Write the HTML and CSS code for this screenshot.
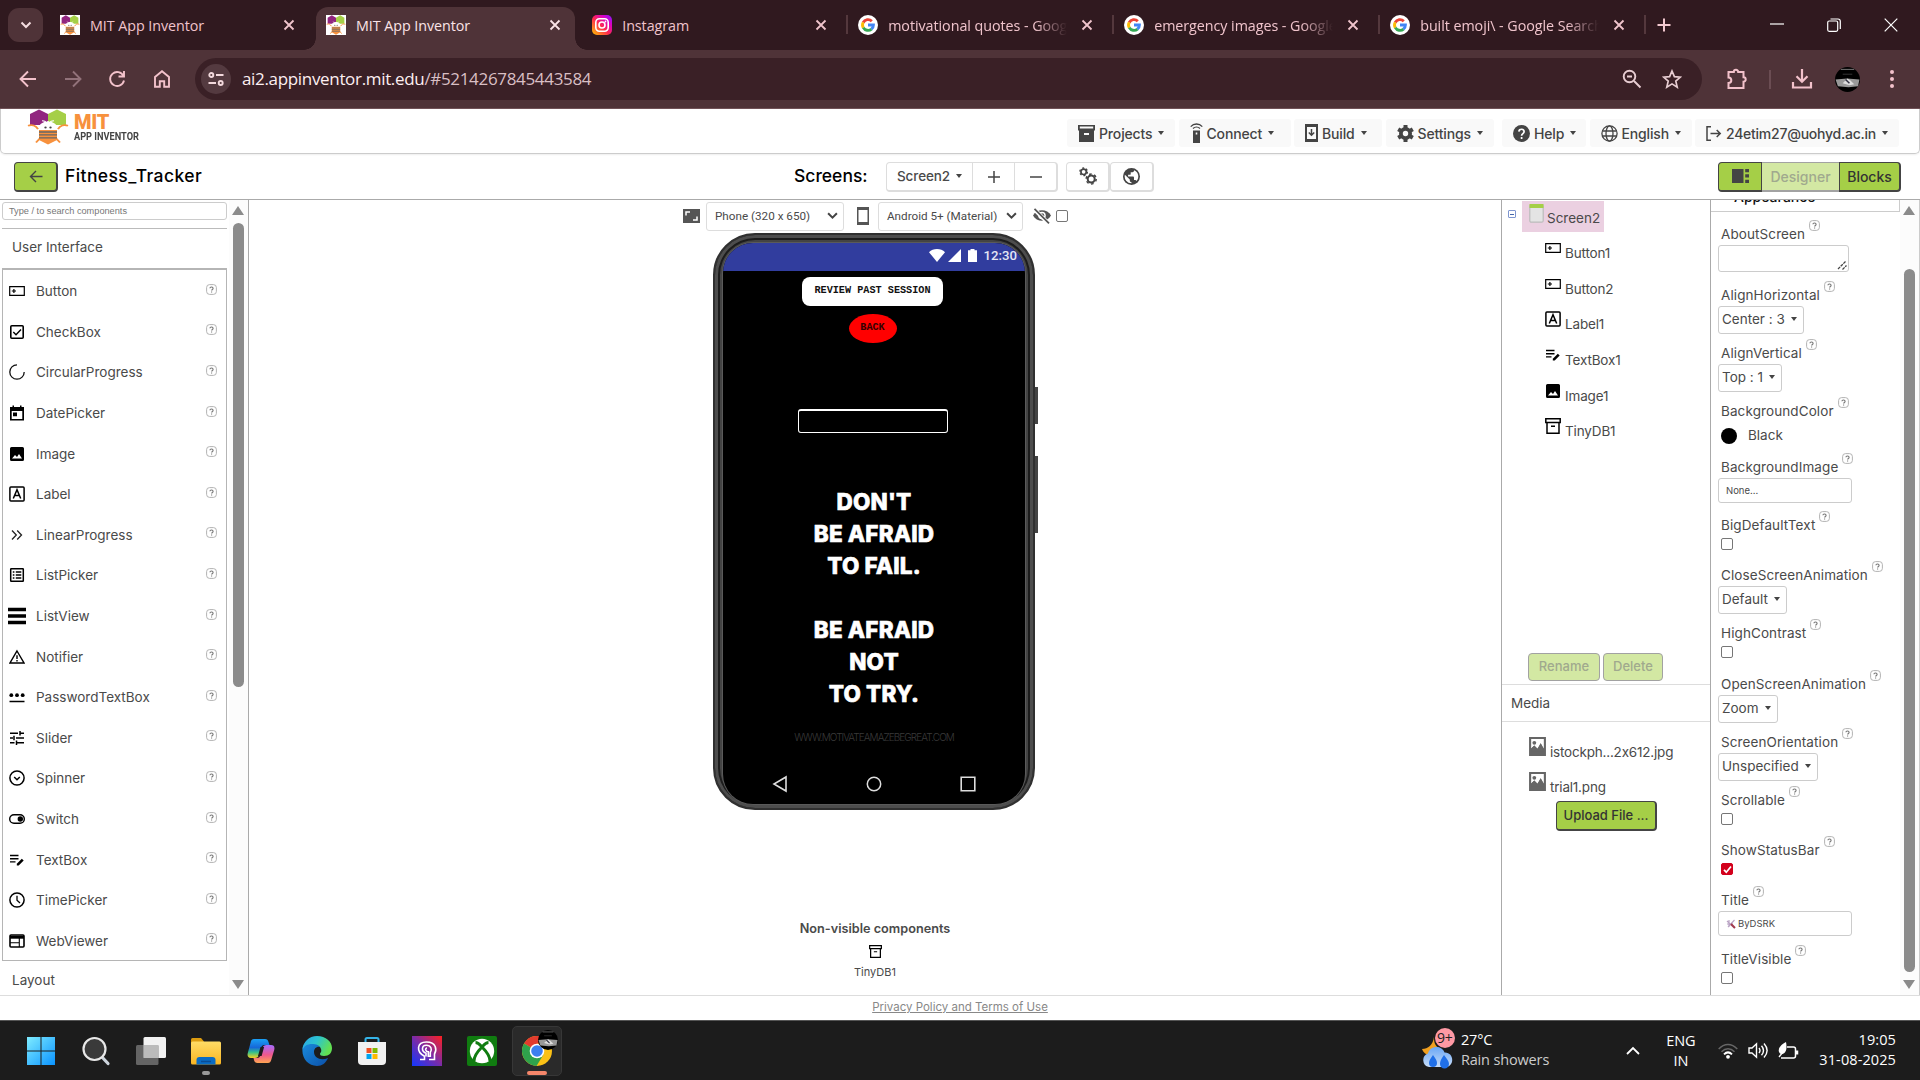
FILE: index.html
```html
<!DOCTYPE html>
<html lang="en">
<head>
<meta charset="utf-8">
<title>MIT App Inventor</title>
<link rel="stylesheet" href="styles.css">
</head>
<body>
<svg class="defs" aria-hidden="true">
  <defs>
    <linearGradient id="g-ig" x1="0" y1="1" x2="1" y2="0"><stop offset="0" stop-color="#ffc800"/><stop offset=".45" stop-color="#ff2a4d"/><stop offset=".75" stop-color="#d800c8"/><stop offset="1" stop-color="#7a1cff"/></linearGradient>
    <linearGradient id="g-win" x1="0" y1="0" x2="1" y2="1"><stop offset="0" stop-color="#7fecff"/><stop offset="1" stop-color="#0a93ff"/></linearGradient>
    <linearGradient id="g-fold" x1="0" y1="0" x2="0" y2="1"><stop offset="0" stop-color="#ffdc66"/><stop offset="1" stop-color="#f9b522"/></linearGradient>
    <linearGradient id="g-id" x1="0" y1="1" x2="1" y2="0"><stop offset="0" stop-color="#1238ff"/><stop offset=".5" stop-color="#7a2ba8"/><stop offset="1" stop-color="#ff2020"/></linearGradient>
    <linearGradient id="g-edge" x1="0" y1="0" x2="1" y2=".4"><stop offset="0" stop-color="#2aa3e8"/><stop offset=".5" stop-color="#2cc4d0"/><stop offset="1" stop-color="#62e052"/></linearGradient>
    <linearGradient id="g-edge2" x1="0" y1="0" x2="1" y2="1"><stop offset="0" stop-color="#1b8fe0"/><stop offset="1" stop-color="#0b4fa8"/></linearGradient>
    <linearGradient id="g-cop1" x1="0" y1="0" x2="0" y2="1"><stop offset="0" stop-color="#1a9ff5"/><stop offset=".45" stop-color="#1668d8"/><stop offset=".7" stop-color="#35c08a"/><stop offset="1" stop-color="#f7d21e"/></linearGradient>
    <linearGradient id="g-cop2" x1="0" y1="0" x2="0" y2="1"><stop offset="0" stop-color="#a56bff"/><stop offset=".55" stop-color="#f0588c"/><stop offset="1" stop-color="#ffa552"/></linearGradient>
    <linearGradient id="g-cloud" x1="0" y1="0" x2="0" y2="1"><stop offset="0" stop-color="#6aa7f5"/><stop offset="1" stop-color="#c6dcf8"/></linearGradient>
    <symbol id="i-bee" viewBox="0 0 42 43">
      <path fill="#91267f" d="M3 6l9-5.500 9 5.500v8l-4 5H3z"/><path fill="#a5cf47" d="M21 6l9-5.500 9 5.500v13H25l-4-5z"/>
      <path fill="#fff" stroke="#fff" stroke-width="2" d="M12 24a9 8 0 0 1 18 0z"/><circle cx="18.500" cy="22" r="1.200" fill="#444"/><circle cx="23.500" cy="22" r="1.200" fill="#444"/>
      <path fill="none" stroke="#f7913d" stroke-width="2" d="M1 20c4-2 8 0 10 4M41 20c-4-2-8 0-10 4M9 40l4-5M33 40l-4-5"/>
      <path fill="none" stroke="#fff" stroke-width="1.200" d="M18 17l-3-3M24 17l3-3"/>
      <path fill="#f7913d" d="M12 25h18v12l-9 5.500L12 37z"/><path stroke="#666" stroke-width="1.600" d="M12 28h18M12 31.500h18M12 35h18"/>
    </symbol>
    <symbol id="i-g" viewBox="0 0 20 20"><circle cx="10" cy="10" r="10" fill="#fff"/><g fill="none" stroke-width="2.900"><path stroke="#ea4335" d="M5.200 7.500A5.400 5.400 0 0 1 13.800 6.200"/><path stroke="#fbbc05" d="M5.300 12.700a5.400 5.400 0 0 1-.1-5.300"/><path stroke="#34a853" d="M13.500 14.100a5.400 5.400 0 0 1-8.200-1.500"/><path stroke="#4285f4" d="M10 10h5.400a5.400 5.400 0 0 1-2 4.200"/></g></symbol>
    <symbol id="i-x" viewBox="0 0 12 12"><path d="M1.500 1.500l9 9m0-9l-9 9" fill="none" stroke="currentColor" stroke-width="1.800"/></symbol>
    <symbol id="i-button" viewBox="0 0 16 16"><path d="M.7 3.700h14.600v8.600H.7z" fill="none" stroke="#000" stroke-width="1.200"/><path d="M2.800 8H7M4.900 5.900v4.200" stroke="#000" stroke-width="1.200"/></symbol>
    <symbol id="i-check" viewBox="0 0 16 16"><rect x="1.800" y="1.800" width="12.400" height="12.400" rx="1" fill="none" stroke="#000" stroke-width="1.600"/><path d="M4.300 8l2.700 2.700 5-5.200" fill="none" stroke="#000" stroke-width="1.400"/></symbol>
    <symbol id="i-circ" viewBox="0 0 16 16"><path d="M8 .8A7.200 7.200 0 1 0 15.200 8" fill="none" stroke="#111" stroke-width="1.300"/></symbol>
    <symbol id="i-date" viewBox="0 0 16 16"><path fill-rule="evenodd" d="M3.500.5H5V2h6V.5h1.500V2H15v13.500H1V2h2.500zM2.700 6v7.900h10.600V6zM4 7.500h4v3.800H4z"/></symbol>
    <symbol id="i-image" viewBox="0 0 16 16"><path fill-rule="evenodd" d="M2.500 1h11A1.500 1.500 0 0 1 15 2.500v11a1.500 1.500 0 0 1-1.500 1.500h-11A1.500 1.500 0 0 1 1 13.500v-11A1.500 1.500 0 0 1 2.500 1zM3 12.500h10L10 8l-2 3-2-2z"/></symbol>
    <symbol id="i-label" viewBox="0 0 16 16"><rect x=".9" y=".9" width="14.200" height="14.200" rx="1" fill="none" stroke="#000" stroke-width="1.500"/><path d="M4.300 12.500L8 3.600l3.700 8.900M5.600 9.600h4.800" fill="none" stroke="#000" stroke-width="1.500"/></symbol>
    <symbol id="i-linear" viewBox="0 0 16 16"><path d="M3 3.500L7.300 8 3 12.500M8.200 3.500L12.500 8l-4.300 4.500" fill="none" stroke="#222" stroke-width="1.300"/></symbol>
    <symbol id="i-listp" viewBox="0 0 16 16"><rect x="1.700" y="1.700" width="12.600" height="12.600" rx=".5" fill="none" stroke="#000" stroke-width="1.500"/><path d="M3.800 5h1.600M3.800 8h1.600m-1.600 3h1.600M6.800 5h5.500M6.800 8h5.500m-5.500 3h5.500" stroke="#000" stroke-width="1.500"/></symbol>
    <symbol id="i-listv" viewBox="0 0 16 16"><path d="M0 2.200h16M0 8h16M0 13.800h16" stroke="#000" stroke-width="3"/></symbol>
    <symbol id="i-notif" viewBox="0 0 16 16"><path d="M8 2L15 14H1z" fill="none" stroke="#000" stroke-width="1.400"/><path d="M8 6.300v3.600M8 10.900v1.500" stroke="#000" stroke-width="1.400"/></symbol>
    <symbol id="i-pass" viewBox="0 0 16 16"><circle cx="2.300" cy="6.200" r="1.900"/><circle cx="8" cy="6.200" r="1.900"/><circle cx="13.700" cy="6.200" r="1.900"/><path d="M.5 12.500h15" stroke="#000" stroke-width="1.500"/></symbol>
    <symbol id="i-slider" viewBox="0 0 16 16"><path d="M1 3.200h8M11 3.200h4M11 1v4.400M1 8h3M5 5.800v4.400M7 8h8M1 12.800h4.500M7.500 10.600V15M8 12.800h7" stroke="#000" stroke-width="1.500"/></symbol>
    <symbol id="i-spin" viewBox="0 0 16 16"><circle cx="8" cy="8" r="7.100" fill="none" stroke="#000" stroke-width="1.500"/><path d="M5.200 7L8 9.700 10.800 7" fill="none" stroke="#000" stroke-width="1.500"/></symbol>
    <symbol id="i-switch" viewBox="0 0 16 16"><rect x=".7" y="3.700" width="14.600" height="8.600" rx="4.300" fill="none" stroke="#000" stroke-width="1.400"/><circle cx="11.300" cy="8" r="2.700"/></symbol>
    <symbol id="i-text" viewBox="0 0 16 16"><path d="M1 3.500h8.500M1 6.700h8.500M1 9.900h5.500" stroke="#000" stroke-width="1.400"/><path d="M7.800 13.600v-1.900l5-5 1.900 1.900-5 5z"/></symbol>
    <symbol id="i-time" viewBox="0 0 16 16"><circle cx="8" cy="8" r="7.100" fill="none" stroke="#000" stroke-width="1.500"/><path d="M8 3.800V8.300l3 2.600" fill="none" stroke="#000" stroke-width="1.300"/></symbol>
    <symbol id="i-web" viewBox="0 0 16 16"><rect x="1" y="2" width="14" height="12" rx="1" fill="none" stroke="#000" stroke-width="1.600"/><path d="M1 4.200h14" stroke="#000" stroke-width="3"/><path d="M1 9.800h9M10.300 5v9" stroke="#000" stroke-width="1.100"/></symbol>
    <symbol id="i-db" viewBox="0 0 16 16"><path d="M.8.800h14.400v3.600H.8zM2 4.500h12v10.700H2zM6 8.300h4" fill="none" stroke="#000" stroke-width="1.500"/></symbol>
    <symbol id="i-q" viewBox="0 0 11 11"><rect x=".6" y=".6" width="9.800" height="9.800" rx="3" fill="#fff" stroke="#aaa" stroke-width=".9"/><path d="M3.900 4.300c.1-1.900 3.200-1.700 3.200.1 0 1-1.500 1.100-1.500 2.200M5.600 7.500v1" fill="none" stroke="#777" stroke-width="1.100"/></symbol>
    <symbol id="i-file" viewBox="0 0 18 18"><path fill="#666" fill-rule="evenodd" d="M1 0h16v18H1zM3 2v9l3-3 3 3 3-5 3 5V2z"/><circle cx="6" cy="5.500" r="1.800" fill="#666"/><path fill="#666" d="M3 13.500V11l3-3 3 4 3-6 3 6v1.500z"/></symbol>
    <symbol id="i-chev" viewBox="0 0 10 7"><path d="M1 1l4 4 4-4" fill="none" stroke="#444" stroke-width="1.800"/></symbol>
    <symbol id="i-photo" viewBox="0 0 26 26"><circle cx="13" cy="13" r="13"/><path d="M6 2.500h14" stroke="#999" stroke-width=".8"/><path d="M8 7.500h10" stroke="#444" stroke-width=".8"/><path fill="#999" d="M.6 13l12-1 12.800 1-1.400 7-10 1-11-1z"/><path fill="#ddd" d="M8 17l5-5 3 2 4 4-5 1z"/><path d="M11 13l4 4" stroke="#334" stroke-width="1.500"/></symbol>
  </defs>
</svg>

<div class="tabstrip">
  <div class="tabsearch"><svg width="12" height="8" viewBox="0 0 12 8"><path d="M1.500 1.500L6 6l4.500-4.500" fill="none" stroke="#f5dde0" stroke-width="2"/></svg></div>
  <div class="tab"><span class="fav sq"><svg width="20" height="20"><use href="#i-bee"/></svg></span><span class="tt">MIT App Inventor</span><svg class="cl"><use href="#i-x"/></svg></div>
  <div class="tab active"><span class="fav sq"><svg width="20" height="20"><use href="#i-bee"/></svg></span><span class="tt">MIT App Inventor</span><svg class="cl"><use href="#i-x"/></svg></div>
  <div class="tab sep"><svg class="fav" viewBox="0 0 20 20"><rect width="20" height="20" rx="5" fill="url(#g-ig)"/><rect x="3.800" y="3.800" width="12.400" height="12.400" rx="3.600" fill="none" stroke="#fff" stroke-width="1.600"/><circle cx="10" cy="10" r="3" fill="none" stroke="#fff" stroke-width="1.600"/><circle cx="13.500" cy="6.500" r=".9" fill="#fff"/></svg><span class="tt">Instagram</span><svg class="cl"><use href="#i-x"/></svg></div>
  <div class="tab sep"><svg class="fav"><use href="#i-g"/></svg><span class="tt fade">motivational quotes - Google Search</span><svg class="cl"><use href="#i-x"/></svg></div>
  <div class="tab sep"><svg class="fav"><use href="#i-g"/></svg><span class="tt fade">emergency images - Google Search</span><svg class="cl"><use href="#i-x"/></svg></div>
  <div class="tab sep last"><svg class="fav"><use href="#i-g"/></svg><span class="tt fade">built emoji\ - Google Search</span><svg class="cl"><use href="#i-x"/></svg></div>
  <svg class="newtab" width="14" height="14" viewBox="0 0 14 14"><path d="M7 .5v13M.5 7h13" stroke="#f3c9d0" stroke-width="2"/></svg>
  <div class="winctl">
    <svg width="14" height="14" viewBox="0 0 14 14"><path d="M0 6h14" stroke="#fff" stroke-width="1.200"/></svg>
    <svg width="14" height="14" viewBox="0 0 14 14"><rect x=".7" y="3" width="10" height="10.300" rx="1.500" fill="none" stroke="#fff" stroke-width="1.200"/><path d="M3.500 1h7.500a2.300 2.300 0 0 1 2.300 2.300V11" fill="none" stroke="#fff" stroke-width="1.200"/></svg>
    <svg width="14" height="14" viewBox="0 0 14 14"><path d="M.7.700l12.600 12.600m0-12.600L.7 13.300" stroke="#fff" stroke-width="1.200"/></svg>
  </div>
</div>

<div class="toolbar">
  <svg class="tb" viewBox="0 0 18 18"><path d="M17 9H2M9 1.500L1.500 9 9 16.500" /></svg>
  <svg class="tb dim" viewBox="0 0 18 18"><path d="M1 9h15M9 1.500L16.500 9 9 16.500"/></svg>
  <svg class="tb" viewBox="0 0 18 18"><path d="M15.500 6A7 7 0 1 0 16 10.500M16 1v5.500h-5.500"/></svg>
  <svg class="tb" viewBox="0 0 18 18"><path d="M2 7l7-5.800L16 7v9.800h-4.800v-5.500H6.800v5.500H2z"/></svg>
  <div class="omni">
    <span class="site"><svg width="16" height="14" viewBox="0 0 16 14"><g fill="none" stroke="#f3d9dd" stroke-width="1.900"><circle cx="3.300" cy="3" r="2"/><path d="M8 3h7.500M.5 11H8"/><circle cx="12.700" cy="11" r="2"/></g></svg></span>
    <span class="url">ai2.appinventor.mit.edu<i>/#5214267845443584</i></span>
    <svg class="oi" viewBox="0 0 20 20"><g fill="none" stroke="#e8cdd2" stroke-width="1.900"><circle cx="7.500" cy="7.500" r="5.800"/><path d="M12 12l6.500 6.500M5 7.500h5"/></g></svg>
    <svg class="oi" viewBox="0 0 20 20"><path d="M10 2l2.400 5.600 6 .5-4.600 4 1.400 6L10 14.900 4.800 18.100l1.400-6-4.600-4 6-.5z" fill="none" stroke="#e8cdd2" stroke-width="1.700"/></svg>
  </div>
  <svg class="ext" width="22" height="22" viewBox="0 0 22 22"><path d="M2.500 4h5.300a2.200 2.200 0 0 1 4.400 0h5.300v5.300a2.200 2.200 0 0 1 0 4.400V20h-15v-5a2.800 2.800 0 0 0 0-5.600z" fill="none" stroke="#f3c2cb" stroke-width="2"/></svg>
  <span class="tsep"></span>
  <svg class="dl" width="22" height="22" viewBox="0 0 22 22"><path d="M11 1v12M5.500 8.200L11 13.700l5.500-5.500M2 14v5.500h18V14" fill="none" stroke="#f3c2cb" stroke-width="2.200"/></svg>
  <svg class="prof" width="25" height="25"><use href="#i-photo"/></svg>
  <svg class="dots" width="6" height="20" viewBox="0 0 6 20"><g fill="#f3c2cb"><circle cx="3" cy="3" r="2"/><circle cx="3" cy="10" r="2"/><circle cx="3" cy="17" r="2"/></g></svg>
</div>

<header class="top">
  <svg class="logo" width="42" height="36" viewBox="0 0 42 43" preserveAspectRatio="none"><path fill="#91267f" d="M3 6l9-5.500 9 5.500v8l-4 5H3z"/><path fill="#a5cf47" d="M21 6l9-5.500 9 5.500v13H25l-4-5z"/><path fill="#fff" stroke="#fff" stroke-width="2" d="M12 24a9 8 0 0 1 18 0z"/><circle cx="18.500" cy="22" r="1.200" fill="#444"/><circle cx="23.500" cy="22" r="1.200" fill="#444"/><path fill="none" stroke="#f7913d" stroke-width="2" d="M1 20c4-2 8 0 10 4M41 20c-4-2-8 0-10 4M9 40l4-5M33 40l-4-5"/><path fill="none" stroke="#fff" stroke-width="1.300" d="M19 17c0-2-1-3-4-3M23 17c0-2 1-3 4-3"/><path fill="#f7913d" d="M12 25h18v12l-9 5.500L12 37z"/><path stroke="#666" stroke-width="1.600" d="M12 27.500h18M12 31h18M12 34.500h18"/></svg>
  <div class="brand"><b>MIT</b><span>APP INVENTOR</span></div>
  <nav class="menu">
    <a class="w108"><svg width="17" height="17" viewBox="0 0 17 17"><path fill="#444" fill-rule="evenodd" d="M0 0h17v5.500h-1V17H1V5.500H0zM1.800 1.500v2h13.400v-2zM6 8v2h5V8z"/></svg><span>Projects</span><i></i></a>
    <a class="w112"><svg width="13" height="20" viewBox="0 0 13 20"><path fill="#444" fill-rule="evenodd" d="M3 7.500h7V20H3zM5.700 9.500v2h1.600v-2z"/><path d="M.7 3.600c3.200-3.500 8.400-3.500 11.600 0M3 5.500c2-1.800 5-1.800 7 0" fill="none" stroke="#444" stroke-width="1.300"/></svg><span>Connect</span><i></i></a>
    <a class="w88"><svg width="13" height="18" viewBox="0 0 13 18"><path fill="#444" fill-rule="evenodd" d="M0 0h13v18H0zM2 3v12h9V3z"/><path d="M6.500 5v6M3.800 8.500l2.700 2.700 2.700-2.700" fill="none" stroke="#444" stroke-width="1.500"/></svg><span>Build</span><i></i></a>
    <a class="w108 g11"><svg width="17" height="17" viewBox="0 0 17 17"><circle cx="8.500" cy="8.500" r="4.600" fill="none" stroke="#444" stroke-width="3.800"/><path d="M8.500 0v3M8.500 14v3M1.200 4.300l2.600 1.500m9.400 5.400l2.600 1.500M1.200 12.700l2.600-1.500m9.400-5.400l2.600-1.500" stroke="#444" stroke-width="4"/></svg><span>Settings</span><i></i></a>
    <a class="w84"><svg width="17" height="17" viewBox="0 0 17 17"><circle cx="8.500" cy="8.500" r="8.500" fill="#444"/><path d="M5.900 6.600c.1-3.300 5.300-3 5.200.1 0 1.900-2.500 1.900-2.500 4M8.600 12v2" fill="none" stroke="#fff" stroke-width="1.700"/></svg><span>Help</span><i></i></a>
    <a class="w102"><svg width="17" height="17" viewBox="0 0 17 17"><g fill="none" stroke="#444" stroke-width="1.300"><circle cx="8.500" cy="8.500" r="7.600"/><ellipse cx="8.500" cy="8.500" rx="3.500" ry="7.600"/><path d="M1.500 6h14m-14 5h14"/></g></svg><span>English</span><i></i></a>
    <a class="w204"><svg width="16" height="15" viewBox="0 0 16 15"><path d="M5 .8H1v13.400h4M4.500 7.500H14M10.700 4l3.500 3.500-3.500 3.500" fill="none" stroke="#444" stroke-width="1.500"/></svg><span>24etim27@uohyd.ac.in</span><i></i></a>
  </nav>
</header>

<div class="bar">
  <button class="btn back"><svg width="14" height="13" viewBox="0 0 14 13"><path d="M13.500 6.500H1.500M7 1L1.500 6.500 7 12" fill="none" stroke="#444" stroke-width="1.400"/></svg></button>
  <span class="proj">Fitness_Tracker</span>
  <span class="scr">Screens:</span>
  <div class="grp"><span class="s1">Screen2<i></i></span><span class="s2"><svg width="12" height="12" viewBox="0 0 12 12"><path d="M6 0v12M0 6h12" stroke="#444" stroke-width="1.500"/></svg></span><span class="s3"><svg width="12" height="12" viewBox="0 0 12 12"><path d="M0 6h12" stroke="#444" stroke-width="1.500"/></svg></span></div>
  <div class="grp g2"><span class="s4"><svg width="18" height="18" viewBox="0 0 18 18"><g fill="none" stroke="#444"><circle cx="4.600" cy="4.800" r="2.700" stroke-width="1.700"/><circle cx="4.600" cy="4.800" r="3.800" stroke-width="1.300" stroke-dasharray="2 2"/><circle cx="12.200" cy="12" r="3.500" stroke-width="2"/><circle cx="12.200" cy="12" r="5" stroke-width="1.500" stroke-dasharray="2.600 2.600"/></g></svg></span></div>
  <div class="grp g3"><span class="s4"><svg width="17" height="17" viewBox="0 0 17 17"><circle cx="8.500" cy="8.500" r="8.500" fill="#444"/><path fill="#fff" d="M1.900 6.800L6.800 11.600v.9c0 .9.800 1.700 1.700 1.700v1.100A6.800 6.800 0 0 1 1.900 6.800zM11 2.200a6.800 6.800 0 0 1 2.500 10.900c-.2-.7-.8-1.200-1.600-1.200H11V9.400c0-.5-.4-.9-.9-.9H5.100V6.800h1.700c.5 0 .9-.4.9-.9V4.300h1.700c.9 0 1.600-.8 1.600-1.700z"/></svg></span></div>
  <div class="modes"><span class="m1"><svg width="17" height="14" viewBox="0 0 17 14"><path fill="#444" d="M0 0h11.500v14H0zM13.200 0H17v3.300h-3.800zM13.200 5.300H17v3.300h-3.800zM13.200 10.700H17V14h-3.800z"/></svg></span><span class="m2">Designer</span><span class="m3">Blocks</span></div>
</div>

<main class="work">
  <section class="palette">
    <div class="pcol">
      <div class="search">Type / to search components</div>
      <div class="cat">User Interface</div>
      <ul class="items">
        <li><svg><use href="#i-button"/></svg><span>Button</span><svg class="q"><use href="#i-q"/></svg></li>
        <li><svg><use href="#i-check"/></svg><span>CheckBox</span><svg class="q"><use href="#i-q"/></svg></li>
        <li><svg><use href="#i-circ"/></svg><span>CircularProgress</span><svg class="q"><use href="#i-q"/></svg></li>
        <li><svg><use href="#i-date"/></svg><span>DatePicker</span><svg class="q"><use href="#i-q"/></svg></li>
        <li><svg><use href="#i-image"/></svg><span>Image</span><svg class="q"><use href="#i-q"/></svg></li>
        <li><svg><use href="#i-label"/></svg><span>Label</span><svg class="q"><use href="#i-q"/></svg></li>
        <li><svg><use href="#i-linear"/></svg><span>LinearProgress</span><svg class="q"><use href="#i-q"/></svg></li>
        <li><svg><use href="#i-listp"/></svg><span>ListPicker</span><svg class="q"><use href="#i-q"/></svg></li>
        <li><svg class="big"><use href="#i-listv"/></svg><span>ListView</span><svg class="q"><use href="#i-q"/></svg></li>
        <li><svg><use href="#i-notif"/></svg><span>Notifier</span><svg class="q"><use href="#i-q"/></svg></li>
        <li><svg><use href="#i-pass"/></svg><span>PasswordTextBox</span><svg class="q"><use href="#i-q"/></svg></li>
        <li><svg><use href="#i-slider"/></svg><span>Slider</span><svg class="q"><use href="#i-q"/></svg></li>
        <li><svg><use href="#i-spin"/></svg><span>Spinner</span><svg class="q"><use href="#i-q"/></svg></li>
        <li><svg><use href="#i-switch"/></svg><span>Switch</span><svg class="q"><use href="#i-q"/></svg></li>
        <li><svg><use href="#i-text"/></svg><span>TextBox</span><svg class="q"><use href="#i-q"/></svg></li>
        <li><svg><use href="#i-time"/></svg><span>TimePicker</span><svg class="q"><use href="#i-q"/></svg></li>
        <li><svg><use href="#i-web"/></svg><span>WebViewer</span><svg class="q"><use href="#i-q"/></svg></li>
      </ul>
      <div class="cat2">Layout</div>
    </div>
    <div class="sb"><b class="up"></b><b class="thumb t1"></b><b class="down"></b></div>
  </section>

  <section class="viewer">
    <div class="vbar">
      <svg width="17" height="14" viewBox="0 0 17 14"><path fill="#555" d="M0 0h17v14H0z"/><path d="M3 6.500V3h4M14 7.500V11h-4" fill="none" stroke="#fff" stroke-width="1.500"/></svg>
      <div class="sel a">Phone (320 x 650)<svg width="11" height="8"><use href="#i-chev"/></svg></div>
      <svg class="ph" width="12" height="18" viewBox="0 0 12 18"><path fill="#555" fill-rule="evenodd" d="M0 0h12v18H0zM1.500 3v12h9V3z"/></svg>
      <div class="sel b">Android 5+ (Material)<svg width="11" height="8"><use href="#i-chev"/></svg></div>
      <svg class="eye" width="18" height="16" viewBox="0 0 18 16"><path d="M0 7.500C3.500.500 14.500.500 18 7.500 14.500 14.500 3.500 14.500 0 7.500z" fill="#555"/><circle cx="9" cy="7.500" r="3.800" fill="#fff"/><circle cx="9" cy="7.500" r="2.300" fill="#555"/><path d="M1.500 1.500l14 14" stroke="#fff" stroke-width="4"/><path d="M1.500.8l14.500 14.500" stroke="#555" stroke-width="1.700"/></svg>
      <span class="cb"></span>
    </div>
    <div class="phone">
      <b class="side u"></b><b class="side d"></b>
      <div class="glass">
        <div class="status">
          <svg width="16" height="13" viewBox="0 0 16 13"><path fill="#fff" d="M0 3.200C4-1 12-1 16 3.200L8 13z"/></svg>
          <svg width="13" height="13" viewBox="0 0 13 13"><path fill="#fff" d="M13 0v13H0z"/></svg>
          <svg width="9" height="13" viewBox="0 0 9 13"><path fill="#fff" d="M2.500 0h4v1.300H9V13H0V1.300h2.500z"/></svg>
          <span>12:30</span>
        </div>
        <div class="review">REVIEW PAST SESSION</div>
        <div class="bk">BACK</div>
        <div class="input"></div>
        <div class="quote"><p>DON'T</p><p>BE AFRAID</p><p>TO FAIL.</p><p>&nbsp;</p><p>BE AFRAID</p><p>NOT</p><p>TO TRY.</p></div>
        <div class="site-url">WWW.MOTIVATEAMAZEBEGREAT.COM</div>
        <div class="navi">
          <svg width="16" height="18" viewBox="0 0 16 18"><path d="M14 2v14L2 9z" fill="none" stroke="#ddd" stroke-width="1.600"/></svg>
          <svg width="16" height="18" viewBox="0 0 16 18"><circle cx="8" cy="9" r="6.700" fill="none" stroke="#ddd" stroke-width="1.500"/></svg>
          <svg width="16" height="18" viewBox="0 0 16 18"><path d="M1.200 2.200h13.600v13.600H1.200z" fill="none" stroke="#ddd" stroke-width="1.600"/></svg>
        </div>
      </div>
    </div>
    <div class="nonvis"><b>Non-visible components</b><svg width="13" height="13"><use href="#i-db"/></svg><span>TinyDB1</span></div>
  </section>

  <section class="treecol">
    <div class="root"><span class="minus"></span><div class="hl"><svg width="15" height="19" viewBox="0 0 15 19"><rect x=".8" y=".8" width="13.400" height="17.400" rx="1.500" fill="#e4e4e4" stroke="#bbb" stroke-width="1.200"/><path fill="#a5cf47" d="M.5 0h14v4H.5z"/></svg><span>Screen2</span></div></div>
    <ul class="tree">
      <li><svg><use href="#i-button"/></svg>Button1</li>
      <li><svg><use href="#i-button"/></svg>Button2</li>
      <li><svg><use href="#i-label"/></svg>Label1</li>
      <li><svg><use href="#i-text"/></svg>TextBox1</li>
      <li><svg><use href="#i-image"/></svg>Image1</li>
      <li><svg><use href="#i-db"/></svg>TinyDB1</li>
    </ul>
    <div class="acts"><span class="dis r">Rename</span><span class="dis d">Delete</span></div>
    <div class="media">Media</div>
    <ul class="files"><li><svg><use href="#i-file"/></svg>istockph...2x612.jpg</li><li><svg><use href="#i-file"/></svg>trial1.png</li></ul>
    <button class="btn upl">Upload File ...</button>
  </section>

  <section class="props">
    <div class="plist">
      <div class="ahead"><span>Appearance</span></div>
      <div class="p h61"><label>AboutScreen<svg><use href="#i-q"/></svg></label><div class="ta"><svg width="10" height="10" viewBox="0 0 10 10"><path d="M1 9l8-8M5.500 9.500l4-4" stroke="#444" stroke-width="1.300" stroke-dasharray="3 .8"/></svg></div></div>
      <div class="p"><label>AlignHorizontal<svg><use href="#i-q"/></svg></label><div class="dd">Center : 3<i></i></div></div>
      <div class="p"><label>AlignVertical<svg><use href="#i-q"/></svg></label><div class="dd">Top : 1<i></i></div></div>
      <div class="p h56"><label>BackgroundColor<svg><use href="#i-q"/></svg></label><div class="color"><b></b>Black</div></div>
      <div class="p"><label>BackgroundImage<svg><use href="#i-q"/></svg></label><div class="tx">None...</div></div>
      <div class="p h50"><label>BigDefaultText<svg><use href="#i-q"/></svg></label><span class="cb"></span></div>
      <div class="p"><label>CloseScreenAnimation<svg><use href="#i-q"/></svg></label><div class="dd">Default<i></i></div></div>
      <div class="p h51"><label>HighContrast<svg><use href="#i-q"/></svg></label><span class="cb"></span></div>
      <div class="p"><label>OpenScreenAnimation<svg><use href="#i-q"/></svg></label><div class="dd">Zoom<i></i></div></div>
      <div class="p"><label>ScreenOrientation<svg><use href="#i-q"/></svg></label><div class="dd">Unspecified<i></i></div></div>
      <div class="p h50"><label>Scrollable<svg><use href="#i-q"/></svg></label><span class="cb"></span></div>
      <div class="p h50"><label>ShowStatusBar<svg><use href="#i-q"/></svg></label><span class="cb on"><svg width="9" height="9" viewBox="0 0 9 9"><path d="M1 4.800l2.300 2.400L8 1.500" fill="none" stroke="#fff" stroke-width="1.700"/></svg></span></div>
      <div class="p h59"><label>Title<svg><use href="#i-q"/></svg></label><div class="tx"><svg width="10" height="10" viewBox="0 0 10 10"><path d="M1 2l7.500 7M8.500 1L2 8M3 1v7M1 5h6" stroke="#b9a3c4" stroke-width="1.200"/><path d="M5 5l4 4" stroke="#a33a4c" stroke-width="1.900"/></svg>ByDSRK</div></div>
      <div class="p"><label>TitleVisible<svg><use href="#i-q"/></svg></label><span class="cb"></span></div>
    </div>
    <div class="sb"><b class="up"></b><b class="thumb t2"></b><b class="down"></b></div>
  </section>
</main>
<footer class="foot"><a>Privacy Policy and Terms of Use</a></footer>

<div class="taskbar">
  <div class="apps">
    <span><svg width="30" height="30" viewBox="0 0 30 30"><path fill="url(#g-win)" d="M1 1h13.500v13.500H1zM15.500 1H29v13.500H15.500zM1 15.500h13.500V29H1zM15.500 15.500H29V29H15.500z"/></svg></span>
    <span><svg width="30" height="30" viewBox="0 0 30 30"><path d="M20 20l7 7.500" stroke="#ccd4dc" stroke-width="3.200" stroke-linecap="round"/><circle cx="13.500" cy="13" r="11" fill="#3a3a3a" stroke="#e8e8e8" stroke-width="2.200"/></svg></span>
    <span><svg width="30" height="30" viewBox="0 0 30 30"><rect x="7.500" y="1" width="22.500" height="21" rx="1.500" fill="#f2f2f2"/><rect x="0" y="9" width="22.500" height="20" rx="1.500" fill="#777" fill-opacity=".8"/><path fill="#bbb" d="M7.500 9h15v13h-15z"/></svg></span>
    <span class="run"><svg width="30" height="30" viewBox="0 0 30 30"><path fill="#dc9c10" d="M0 3.500Q0 2 1.500 2H10l3 3.500V9H0z"/><rect y="5.500" width="30" height="23" rx="1.500" fill="url(#g-fold)"/><path fill="#0a6cc4" d="M5.500 28.500V24a3 3 0 0 1 3-3h13a3 3 0 0 1 3 3v4.500z"/><path d="M10 25.500h10" stroke="#0a4c94" stroke-width="1.500"/></svg></span>
    <span><svg width="30" height="30" viewBox="0 0 30 30"><path fill="url(#g-cop1)" d="M8 3h11c2 0 3 1 3.500 3l1 3h-5c-2 0-3 1-3.500 3l-2 7c-.6 2-2 3-4 3H5c-3 0-4-2-3.200-5l2.700-10C5 4 6 3 8 3z"/><path fill="url(#g-cop2)" d="M22 27H11.500c-2 0-3-1-3.500-3l-.5-2H11c2 0 3-1 3.500-3l2-7c.6-2 2-3 4-3H25c3 0 4 2 3.200 5l-2.700 9c-.6 2.500-1.500 4-3.500 4z"/><path fill="#1c1c1c" d="M14.500 11h3.600l-2.500 9H12z"/></svg></span>
    <span><svg width="30" height="30" viewBox="0 0 30 30"><path fill="url(#g-edge2)" d="M.5 13C1 6 7 3 13 6l6 5c-5-1-7 2-7 5 0 6 7 9 14 6-2 5-6 8-11 8C6 30-.5 22 .5 13z"/><path fill="url(#g-edge)" d="M.5 14C1 6 7 0 15 0c9 0 15 6 15 12 0 5-3 8-8 8-3 0-4-1-4-2 0-1 2-2 1-5-1-4-5-5-9-5C5 8 2 10 .5 14z"/></svg></span>
    <span><svg width="30" height="30" viewBox="0 0 30 30"><path d="M8.500 8V3.500Q8.500 2 10 2h10q1.500 0 1.500 1.500V8" fill="none" stroke="#35b4e8" stroke-width="2"/><path fill="#f1f1f1" d="M1 6h28v19a4 4 0 0 1-4 4H5a4 4 0 0 1-4-4z"/><path fill="#f25022" d="M9.500 12h5v5h-5z"/><path fill="#7fba00" d="M15.500 12h5v5h-5z"/><path fill="#00a4ef" d="M9.500 18h5v5h-5z"/><path fill="#ffb900" d="M15.500 18h5v5h-5z"/></svg></span>
    <span><svg width="30" height="30" viewBox="0 0 30 30"><path fill="url(#g-id)" d="M0 0h30v30H0z"/><g fill="none" stroke="#fff" stroke-width="1.600"><path d="M8 23.500h4.500v-3.300C4 16 4.500 6 14.500 6S25 14 22.500 18v5.500h-5.500"/><path d="M14 20.500v-3.200c-5-2-4.500-8 .3-8s6.200 4.200 4 7.200v3.800h-2v-4.500c-3 0-3.500-3.800-1.300-3.800"/></g></svg></span>
    <span><svg width="30" height="30" viewBox="0 0 30 30"><rect width="30" height="30" rx="2" fill="#107c10"/><circle cx="15" cy="15" r="12.200" fill="#fff"/><path d="M7 25c0-6 5-11 8-14 3 3 8 8 8 14M8.500 6.500c3 0 5 3 6.500 4.500 1.500-1.500 3.500-4.500 6.500-4.500" fill="none" stroke="#107c10" stroke-width="3"/></svg></span>
    <span class="act"><svg width="30" height="30" viewBox="0 0 30 30"><circle cx="15" cy="15" r="15" fill="#fbc116"/><path fill="#e33b2e" d="M15 15L2 7.500A15 15 0 0 1 28 7.500H15z"/><path fill="#2fa24c" d="M15 15L2 7.500A15 15 0 0 0 14.500 30l7-11.500z"/><circle cx="15" cy="15" r="7.300" fill="#fff"/><circle cx="15" cy="15" r="5.800" fill="#3c7ff0"/></svg><svg class="mini" width="20" height="20"><use href="#i-photo"/></svg></span>
  </div>
  <div class="weather">
    <div class="wi"><svg width="31" height="32" viewBox="0 0 31 32"><path fill="#f0a020" d="M12 0c0 6 1 10 8 12L8 18C4 18 1 15 0 12c6 0 11-4 12-12z"/><path fill="url(#g-cloud)" d="M7 30a7 7 0 0 1-1-13.500C8 8 20 8 22.500 15.500 32 15 33 29 24 30z"/><path fill="#1f6fe8" d="M11 18c3 4 4 6 4 8a4 4 0 0 1-8 0c0-2 1-4 4-8zM22 18c3 4 5 6 5 9a4.500 4.500 0 0 1-9 0c0-3 1-5 4-9z"/></svg><b>9+</b></div>
    <div class="wt"><span>27°C</span><em>Rain showers</em></div>
  </div>
  <svg class="tchev" width="14" height="9" viewBox="0 0 14 9"><path d="M1 8l6-6 6 6" fill="none" stroke="#fff" stroke-width="1.800"/></svg>
  <div class="lang"><span>ENG</span><span>IN</span></div>
  <div class="sys">
    <svg width="20" height="16" viewBox="0 0 20 16"><g fill="none" stroke-width="1.500"><path stroke="#666" d="M.7 6c5.500-6 13-6 18.600 0M3.500 8.800c4-4 9-4 13 0"/><path stroke="#fff" stroke-width="1.900" d="M6 11.300c2.500-2.500 5.500-2.500 8 0"/></g><circle cx="10" cy="13.800" r="1.900" fill="#fff"/></svg>
    <svg width="20" height="17" viewBox="0 0 20 17"><path d="M1 6h3l4.500-4.200v13.400L4 11H1zM11 6c1.200 1.500 1.200 3.500 0 5M13.500 3.700c2.500 3 2.500 6.600 0 9.600M16 1.500c4 4.500 4 9.500 0 14" fill="none" stroke="#fff" stroke-width="1.400"/></svg>
    <svg width="21" height="18" viewBox="0 0 21 18"><path d="M9 5h6.500q2 0 2 2v7q0 2-2 2H3" fill="none" stroke="#fff" stroke-width="1.500"/><path d="M19 8.500v4" stroke="#fff" stroke-width="2.500"/><path fill="#fff" d="M8 0c1 5 1 12-5 12-4-2-3-8 5-12z"/><path d="M1 15l4-5" stroke="#fff" stroke-width="1.300"/></svg>
  </div>
  <div class="clock"><span>19:05</span><span>31-08-2025</span></div>
</div>
</body>
</html>
```
FILE: styles.css
```css
* { box-sizing: border-box; }
body { margin: 0; width: 1920px; height: 1080px; overflow: hidden; background: #fff; font-family: Inter, "Open Sans", sans-serif; font-feature-settings: "calt" 0; font-size: 13.5px; color: #4a4a4a; display: flex; flex-direction: column; }
svg { display: block; flex: none; }
ul, p { margin: 0; padding: 0; list-style: none; }
i { font-style: normal; }
.defs { position: absolute; width: 0; height: 0; }

/* browser tabs */
.tabstrip { height: 50px; flex: none; background: #30191f; display: flex; align-items: center; padding-left: 8px; font-family: "Open Sans", sans-serif; color: #f0c4cc; }
.tabsearch { width: 35px; height: 34px; border-radius: 11px; background: #4f3338; display: flex; align-items: center; justify-content: center; margin-right: 7px; }
.tab { width: 266px; height: 43px; align-self: flex-end; padding: 0 21px 7px 10px; display: flex; align-items: center; position: relative; }
.tab.active { background: #4f3338; border-radius: 12px 12px 0 0; color: #fbe4e7; margin: 0 7px 0 0; width: 259.200px; padding-right: 14px; }
.tab.active::before, .tab.active::after { content: ""; position: absolute; bottom: 0; width: 12px; height: 12px; }
.tab.active::before { left: -12px; background: radial-gradient(circle at 0 0, transparent 11.500px, #4f3338 12px); }
.tab.active::after { right: -12px; background: radial-gradient(circle at 100% 0, transparent 11.500px, #4f3338 12px); }
.tab.sep::after { content: ""; position: absolute; right: 0; top: 8px; width: 2px; height: 19px; background: #54383d; }
.fav { width: 20px; height: 20px; margin-right: 10px; flex: none; }
.fav.sq { background: #fff; }
.tt { flex: 1; font-size: 14.300px; letter-spacing: -.05px; white-space: nowrap; overflow: hidden; margin-right: 20px; }
.tt.fade { -webkit-mask-image: linear-gradient(90deg, #000 82%, transparent 100%); mask-image: linear-gradient(90deg, #000 82%, transparent 100%); margin-right: 14px; }
.cl { width: 12px; height: 12px; }
.newtab { margin-left: 11px; }
.winctl { margin-left: auto; display: flex; gap: 43px; padding-right: 22px; }

/* browser toolbar */
.toolbar { height: 59px; flex: none; background: #4f3338; border-bottom: 1px solid #69494f; display: flex; align-items: center; padding: 0 25px 0 19px; }
.tb { width: 18px; height: 18px; fill: none; stroke: #f3c2cb; stroke-width: 1.900; margin-right: 26.500px; }
.tb.dim { stroke: #92727a; }
.omni { width: 1507px; height: 42px; margin-left: -2px; border-radius: 21px; background: #3a2026; display: flex; align-items: center; padding-left: 6px; padding-right: 20px; }
.site { width: 30px; height: 30px; border-radius: 50%; background: #543a40; display: flex; align-items: center; justify-content: center; margin-right: 11px; }
.url { flex: 1; font-family: "Open Sans", sans-serif; font-size: 17px; color: #fdeff1; letter-spacing: -.33px; padding-bottom: 1px; }
.url i { color: #d9bfc4; }
.oi { width: 20px; height: 20px; margin-left: 20px; }
.ext { margin-left: 24px; }
.tsep { width: 2px; height: 19px; background: #6b4d53; margin-left: 21px; }
.dl { margin-left: 20px; }
.prof { margin-left: 22px; }
.dots { margin-left: auto; }

/* app header */
.top { height: 45px; flex: none; border: 1px solid #ccc; border-top: 0; border-radius: 0 0 5px 5px; display: flex; align-items: flex-start; padding-left: 26px; box-shadow: 0 1px 2px #eee; }
.brand { display: flex; flex-direction: column; padding-left: 5px; font-family: Roboto, sans-serif; line-height: 1; }
.brand b { color: #f7913d; font-size: 20px; font-weight: 900; margin-top: 3px; letter-spacing: -.3px; }
.brand span { font-size: 10px; font-weight: 700; color: #444; white-space: nowrap; transform: scaleX(.92); transform-origin: 0 0; }
.menu { margin-left: auto; margin-right: 20px; margin-top: 10px; display: flex; gap: 3.500px; }
.menu a { height: 28px; background: #f9f9f9; border-radius: 3px; display: flex; align-items: center; padding-left: 11px; font-weight: 500; font-size: 14px; white-space: nowrap; color: #444; }
.menu a span { margin-left: 4px; letter-spacing: -.15px; }
.menu a i, .s1 i, .dd i { border: 3px solid transparent; border-top: 4px solid #444; border-bottom: 0; margin-left: 6px; }
.w108 { width: 108px; } .w112 { width: 112px; } .w88 { width: 88px; } .w84 { width: 84px; } .w102 { width: 102px; } .w204 { width: 204px; }
.menu .w204 span { letter-spacing: -.25px; }
.g11 { margin-right: 5px; }

.bar { height: 46px; flex: none; border-bottom: 1px solid #aaa; display: flex; align-items: flex-start; padding: 8px 19px 0 14px; }
.btn { background: #a5cf47; border: 1px solid #444; border-right-width: 2px; border-bottom-width: 2px; border-radius: 4px; padding: 0; display: flex; align-items: center; justify-content: center; font: 500 13px Inter, sans-serif; color: #333; }
.back { width: 44px; height: 30px; }
.proj { margin-left: 7px; font-size: 17.500px; font-weight: 500; color: #000; line-height: 28px; width: 729px; letter-spacing: .4px; }
.scr { font-size: 17.500px; font-weight: 500; color: #000; line-height: 28px; width: 92px; }
.grp { display: flex; height: 30px; border: 1px solid #ddd; border-right-width: 2px; border-bottom-width: 2px; border-radius: 4px; }
.grp span { display: flex; align-items: center; justify-content: center; }
.grp span + span { border-left: 1px solid #ddd; }
.s1 { width: 85px; font-weight: 500; padding-bottom: 2px; letter-spacing: -.1px; } .s2 { width: 42px; } .s3 { width: 42px; }
.g2 { margin-left: 8px; } .s4 { width: 41px; padding-bottom: 1px; }
.modes { margin-left: auto; display: flex; height: 30px; font-weight: 500; font-size: 14px; }
.modes span { display: flex; align-items: center; justify-content: center; border: 1px solid #444; border-bottom-width: 2px; background: #a5cf47; padding-bottom: 1px; }
.modes .m1 { width: 44px; border-radius: 4px 0 0 4px; }
.modes .m2 { width: 77px; background: #d3e8a3; border-color: #a2a2a2; color: #a0a98e; border-left: 0; border-right: 0; }
.modes .m3 { width: 62px; border-radius: 0 4px 4px 0; border-right-width: 2px; color: #333; }

/* workspace */
.work { height: 796px; flex: none; display: flex; border-bottom: 1px solid #ddd; }
.palette { width: 249px; border-right: 1px solid #aaa; display: flex; }
.pcol { width: 229px; padding: 2px 2px 0; }
.search { width: 225px; height: 18px; border: 1px solid #ccc; border-radius: 3px; font: 9.200px/17px "Liberation Sans", sans-serif; color: #777; padding-left: 6px; }
.cat { margin-top: 8px; border-top: 1px solid #bbb; width: 225px; height: 40px; line-height: 37px; padding-left: 10px; }
.items { width: 225px; height: 693px; border: 1px solid #b5b5b5; border-top-width: 2px; padding-top: 1px; }
.items li { height: 40.600px; display: flex; align-items: center; padding-left: 6px; }
.items li > svg { width: 16px; height: 16px; }
.items li > svg.big { width: 18px; height: 18px; margin-left: -1px; margin-right: -1px; }
.items li > span { flex: 1; margin-left: 11px; }
.items li > .q { width: 11px; height: 11px; margin: -4px 9px 0 0; }
.cat2 { padding: 11px 0 0 10px; }
.sb { width: 19px; background: #fcfcfc; position: relative; display: flex; flex-direction: column; align-items: center; padding-top: 6px; padding-right: 1px; }
.up { border: 6px solid transparent; border-bottom: 9px solid #8b8b8b; border-top: 0; }
.down { border: 6px solid transparent; border-top: 9px solid #8b8b8b; border-bottom: 0; margin-top: auto; margin-bottom: 6px; }
.thumb { width: 11px; border-radius: 6px; background: #8b8b8b; }
.t1 { height: 464px; margin-top: 8px; }
.t2 { height: 703px; margin-top: 54px; }

.viewer { width: 1252px; display: flex; flex-direction: column; align-items: flex-start; }
.vbar { display: flex; align-items: center; height: 31px; padding-top: 1px; padding-left: 434px; font: 11.700px Roboto, sans-serif; }
.sel { height: 29px; border: 1px solid #ddd; border-radius: 3px; display: flex; align-items: center; justify-content: space-between; padding: 0 5px 1px 8px; white-space: nowrap; }
.sel.a { width: 138px; margin-left: 6px; } .sel.b { width: 145px; margin-left: 9px; }
.ph { margin-left: 13px; }
.eye { margin-left: 10px; }
.cb { display: flex; align-items: center; justify-content: center; width: 12px; height: 12px; border: 1px solid #767676; border-radius: 2px; background: #fff; margin: 0 0 0 5px; }
.phone { width: 322px; height: 577px; margin: 2px 0 0 464px; border-radius: 42px; background: #444; border: 2px solid #303030; position: relative; padding: 8px 8px 5px; box-shadow: inset 0 0 0 3px #4d4d4d, inset 0 0 0 5px #1c1c1c; }
.side { position: absolute; right: -5px; width: 3px; background: #444; }
.side.u { top: 152px; height: 37px; } .side.d { top: 221px; height: 77px; }
.glass { height: 561px; width: 302px; background: #000; border-radius: 30px; overflow: hidden; display: flex; flex-direction: column; align-items: center; box-shadow: 0 0 0 1px #5a5a5a; }
.status { width: 100%; height: 28px; background: #313d9e; display: flex; align-items: center; justify-content: flex-end; padding: 0 8px 3px 0; font: 500 13.200px Roboto, sans-serif; color: #e4e6f4; }
.status svg { margin-right: 3px; } .status svg:nth-child(3) { margin: 0 7px 0 4px; }
.review { margin: 6px 3px 0 0; width: 141px; height: 29px; border-radius: 8px; background: #fff; font: bold 10.200px/28px "Liberation Mono", monospace; color: #111; text-align: center; }
.bk { margin: 8px 3px 0 0; width: 48px; height: 29px; border-radius: 50%; background: #f00; font: bold 10.200px/28px "Liberation Mono", monospace; color: #300; text-align: center; }
.input { margin: 66px 3px 0 0; width: 150px; height: 24px; border: 1px solid #fff; border-top-width: 2px; border-radius: 3px; }
.quote { margin-top: 53px; text-align: center; font-weight: 800; font-size: 22.500px; line-height: 32px; color: #fff; font-family: Inter, sans-serif; -webkit-text-stroke: .6px #fff; letter-spacing: .15px; }
.site-url { margin-top: 17px; font: 300 10px/20px Inter, sans-serif; color: #3a3a3a; letter-spacing: -.93px; white-space: nowrap; }
.navi { margin-top: 28px; display: flex; gap: 78px; }
.nonvis { width: 160px; margin: 109px 0 0 546px; display: flex; flex-direction: column; align-items: center; font-size: 12px; }
.nonvis b { line-height: 20px; font-size: 12.700px; white-space: nowrap; font-weight: 600; }
.nonvis svg { margin: 6px 0 5px; }
.nonvis span { line-height: 18px; font-size: 11px; }

.treecol { width: 210px; border-left: 1px solid #aaa; border-right: 1px solid #aaa; display: flex; flex-direction: column; }
.root { display: flex; height: 35px; padding: 1px 0 0 6px; }
.minus { width: 8px; height: 8px; margin: 9px 7px 0 0; border: 1px solid #7f96d0; border-radius: 1px; background: linear-gradient(#46a, #46a) center/4px 1px no-repeat; }
.hl { width: 82px; height: 31px; background: #ebd0e1; display: flex; padding: 3px 0 0 7px; margin-left: -1px; }
.hl span { margin: 4px 0 0 3px; line-height: 20px; }
.tree li { height: 35.700px; padding-left: 43px; display: flex; line-height: 36px; letter-spacing: -.15px; }
.tree svg { width: 16px; height: 16px; margin: 5px 4px 0 0; }
.acts { display: flex; gap: 3px; padding-left: 26px; margin-top: 204px; }
.dis { height: 28px; border: 1px solid #a2a2a2; border-radius: 4px; background: #d3e8a3; color: #a0a98e; font-size: 13px; font-weight: 500; line-height: 24px; text-align: center; }
.dis.r { width: 72px; } .dis.d { width: 60px; }
.media { margin-top: 3px; height: 38px; border: 1px solid #ddd; border-left: 0; border-right: 0; line-height: 36px; padding-left: 9px; }
.files { margin-top: 12px; letter-spacing: -.2px; }
.files li { height: 35px; padding-left: 26px; display: flex; line-height: 36px; }
.files svg { width: 19px; height: 19px; margin: 3px 3px 0 0; }
.upl { width: 101px; height: 30px; margin: -3px 0 0 54px; padding-bottom: 2px; }

.props { width: 209px; border-right: 1px solid #ccc; display: flex; }
.plist { width: 189px; overflow: hidden; }
.ahead { height: 12px; margin-bottom: 12px; border-bottom: 1px solid #ccc; border-right: 1px solid #ccc; overflow: hidden; font-weight: 500; color: #111; }
.ahead span { display: block; line-height: 20px; margin: -13px 0 0 23px; font-size: 14px; }
.p { height: 58px; padding-left: 7px; }
.h61 { height: 61px; } .h56 { height: 56px; } .h50 { height: 50px; } .h51 { height: 51px; } .h59 { height: 59px; }
.p label { display: flex; height: 20px; line-height: 20px; padding-left: 3px; white-space: nowrap; letter-spacing: .1px; }
.p label svg { width: 11px; height: 11px; margin: -4px 0 0 4px; }
.p .cb { margin: 3px 0 0 3px; }
.cb.on { background: #d3001c; border-color: #d3001c; }
.dd { display: inline-flex; height: 28px; margin-top: 1px; border: 1px solid #ccc; border-radius: 3px; align-items: center; padding: 0 6px 2px 3px; }
.ta { width: 131px; height: 27px; margin-top: 1px; border: 1px solid #ccc; border-radius: 3px; display: flex; align-items: flex-end; justify-content: flex-end; padding: 1px; }
.tx { width: 134px; height: 25px; margin-top: 1px; border: 1px solid #ccc; border-radius: 3px; padding-left: 7px; font-size: 9.500px; display: flex; align-items: center; }
.tx svg { margin-right: 2px; }
.color { display: flex; align-items: center; padding-left: 3px; height: 27px; }
.color b { width: 16px; height: 16px; border-radius: 50%; background: #000; margin: 3px 11px 0 0; }

.foot { height: 24px; flex: none; text-align: center; font-size: 11.500px; line-height: 22px; color: #888; text-decoration: underline; }

/* taskbar */
.taskbar { height: 60px; flex: none; background: #1c1c1c; border-top: 1px solid #555; display: flex; align-items: center; color: #fff; font: 14.500px/20px "Open Sans", sans-serif; letter-spacing: -.15px; }
.apps { display: flex; padding-left: 13px; gap: 0; }
.apps span { width: 55.200px; height: 50px; display: flex; align-items: center; justify-content: center; position: relative; }
.run::after { content: ""; position: absolute; bottom: 1px; width: 8px; height: 4px; border-radius: 2px; background: #999; }
.act::before { content: ""; position: absolute; inset: 0 2.500px; border-radius: 5px; background: #2a2a2a; border: 1px solid #373737; }
.act svg { position: relative; }
.act::after { content: ""; position: absolute; bottom: 1px; width: 20px; height: 4px; border-radius: 2px; background: #f5866a; }
.act .mini { position: absolute; right: 7px; top: 4px; }
.weather { margin-left: 857px; width: 191px; display: flex; }
.wi { position: relative; padding-top: 7px; width: 39px; }
.wi b { position: absolute; left: 13px; top: -2px; width: 20px; height: 20px; border-radius: 50%; background: #ff99a4; color: #222; font-weight: 400; font-size: 14px; text-align: center; }
.wt { display: flex; flex-direction: column; padding-bottom: 1px; }
.wt em { font-style: normal; color: #ccc; }
.tchev { margin-left: 13px; }
.lang { width: 50px; margin-left: 16px; display: flex; flex-direction: column; align-items: center; }
.sys { display: flex; gap: 10px; align-items: center; margin-left: 12px; }
.clock { margin-left: auto; padding: 0 24px 1px 0; text-align: right; display: flex; flex-direction: column; letter-spacing: .1px; }
```
